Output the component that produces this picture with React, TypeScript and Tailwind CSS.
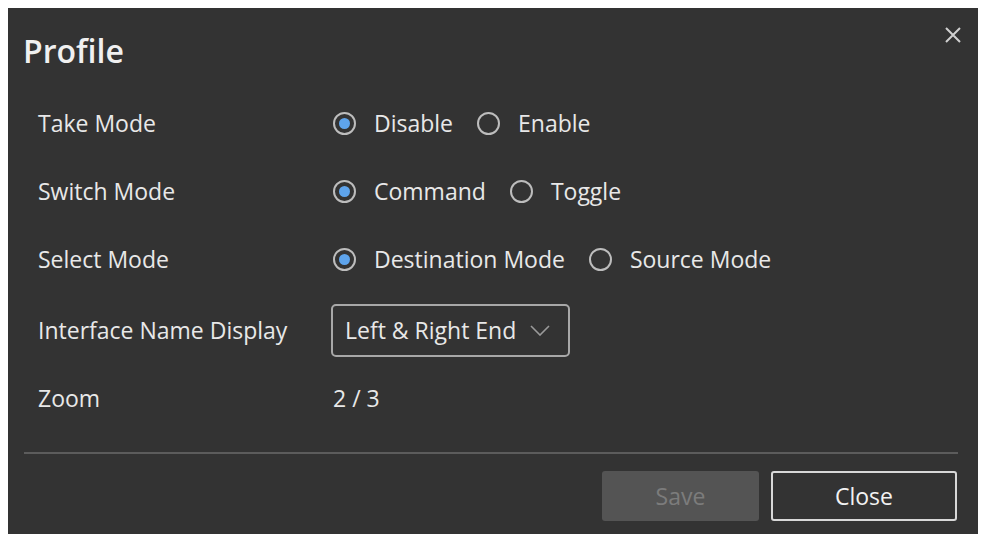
import React, { useState } from "react";

type Option = { value: string; label: string };

const rows: { label: string; key: string; options: Option[] }[] = [
  {
    label: "Take Mode",
    key: "take",
    options: [
      { value: "disable", label: "Disable" },
      { value: "enable", label: "Enable" },
    ],
  },
  {
    label: "Switch Mode",
    key: "switch",
    options: [
      { value: "command", label: "Command" },
      { value: "toggle", label: "Toggle" },
    ],
  },
  {
    label: "Select Mode",
    key: "select",
    options: [
      { value: "destination", label: "Destination Mode" },
      { value: "source", label: "Source Mode" },
    ],
  },
];

const Radio: React.FC<{ checked: boolean; label: string; onClick: () => void }> = ({
  checked,
  label,
  onClick,
}) => (
  <button type="button" onClick={onClick} className="flex items-center gap-[18px] mr-[24px]">
    <span className="w-[23px] h-[23px] rounded-full border-2 border-[#bdbdbd] flex items-center justify-center">
      {checked && <span className="w-[11px] h-[11px] rounded-full bg-[#5ea4ec]" />}
    </span>
    <span>{label}</span>
  </button>
);

const App: React.FC = () => {
  const [values, setValues] = useState<Record<string, string>>({
    take: "disable",
    switch: "command",
    select: "destination",
  });

  return (
    <div
      className="w-[982px] h-[534px] bg-white pl-[8px] pt-[8px] overflow-hidden"
      style={{ fontFamily: '"Open Sans", "Noto Sans", sans-serif' }}
    >
      <div className="w-[970px] h-[526px] bg-[#333333] text-[#e8e8e8] flex flex-col">
        {/* header */}
        <div className="h-[81px] flex items-start justify-between pl-[15px] pr-[16px]">
          <h1 className="text-[32px] font-semibold text-[#f0f0f0] mt-[27px] leading-none">Profile</h1>
          <button type="button" className="mt-[18px] text-[#d0d0d0]">
            <svg width="18" height="18" viewBox="0 0 18 18" fill="none" stroke="currentColor" strokeWidth="2">
              <path d="M2 2 L16 16 M16 2 L2 16" />
            </svg>
          </button>
        </div>

        {/* body */}
        <div className="pl-[30px] text-[23px]">
          {rows.map((row, i) => (
            <div key={row.key} className={`flex items-center ${i === 2 ? "h-[69px]" : "h-[68px]"}`}>
              <div className="w-[295px]">{row.label}</div>
              <div className="flex items-center">
                {row.options.map((opt) => (
                  <Radio
                    key={opt.value}
                    label={opt.label}
                    checked={values[row.key] === opt.value}
                    onClick={() => setValues({ ...values, [row.key]: opt.value })}
                  />
                ))}
              </div>
            </div>
          ))}

          <div className="flex items-center h-[72px]">
            <div className="w-[293px]">Interface Name Display</div>
            <button
              type="button"
              className="h-[53px] w-[239px] border-2 border-[#a8a8a8] rounded-[5px] flex items-center pl-[12px] pr-[10px] gap-[14px]"
            >
              <span className="whitespace-nowrap">Left &amp; Right End</span>
              <svg width="20" height="11" viewBox="0 0 20 11" fill="none" stroke="#9a9a9a" strokeWidth="1.6">
                <path d="M1 1 L10 10 L19 1" />
              </svg>
            </button>
          </div>

          <div className="flex items-center h-[64px]">
            <div className="w-[295px]">Zoom</div>
            <div>2 / 3</div>
          </div>
        </div>

        {/* footer */}
        <div className="mt-[22px] ml-[16px] mr-[20px] h-[2px] bg-[#5c5c5c]" />
        <div className="flex justify-end gap-[12px] pr-[21px] mt-[17px]">
          <button
            type="button"
            disabled
            className="w-[157px] h-[50px] rounded-[3px] bg-[#545454] text-[#7c7c7c] text-[23px]"
          >
            Save
          </button>
          <button
            type="button"
            className="w-[186px] h-[50px] rounded-[3px] border-2 border-[#d8d8d8] text-[#f2f2f2] text-[23px]"
          >
            Close
          </button>
        </div>
      </div>
    </div>
  );
};

export default App;
